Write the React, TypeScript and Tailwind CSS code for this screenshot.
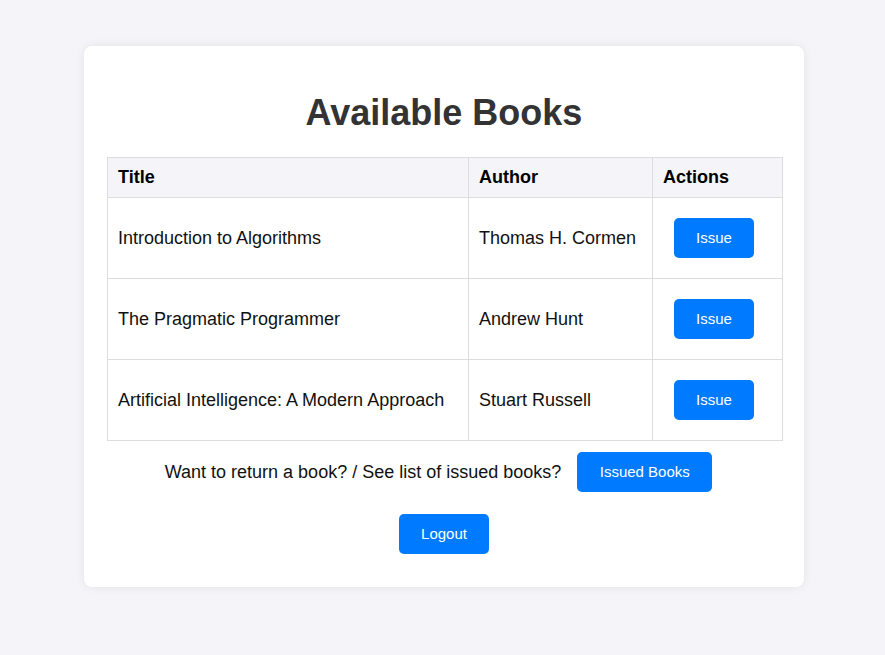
import React from "react";

const books = [
  { title: "Introduction to Algorithms", author: "Thomas H. Cormen" },
  { title: "The Pragmatic Programmer", author: "Andrew Hunt" },
  { title: "Artificial Intelligence: A Modern Approach", author: "Stuart Russell" },
];

export default function App() {
  return (
    <div className="min-h-screen bg-[#f4f4f9] pt-[46px] font-['Liberation_Sans',Arial,sans-serif]">
      <div className="ml-[84px] w-[720px] rounded-lg bg-white px-[23px] pt-[46px] pb-[33px] shadow-[0_0_10px_rgba(0,0,0,0.08)]">
        <h1 className="text-center text-[36px] leading-[41px] font-bold text-[#333]">
          Available Books
        </h1>
        <table className="mt-[24px] w-[675px] table-fixed border-collapse text-[18px] text-[#111]">
          <colgroup>
            <col className="w-[361px]" />
            <col className="w-[184px]" />
            <col className="w-[130px]" />
          </colgroup>
          <thead>
            <tr className="bg-[#f4f4f9]">
              <th className="h-[40px] border border-[#ddd] px-[10px] text-left font-bold text-black">
                Title
              </th>
              <th className="border border-[#ddd] px-[10px] text-left font-bold text-black">
                Author
              </th>
              <th className="border border-[#ddd] px-[10px] text-left font-bold text-black">
                Actions
              </th>
            </tr>
          </thead>
          <tbody>
            {books.map((b, i) => (
              <tr key={i} className="h-[81px]">
                <td className="border border-[#ddd] px-[10px] align-middle">{b.title}</td>
                <td className="border border-[#ddd] px-[10px] align-middle">{b.author}</td>
                <td className="border border-[#ddd] px-[10px] align-middle">
                  <button className="ml-[11px] h-[40px] w-[80px] rounded-[5px] bg-[#007bff] text-[15px] text-white">
                    Issue
                  </button>
                </td>
              </tr>
            ))}
          </tbody>
        </table>
        <div className="mt-[11px] flex items-center justify-center pr-[11px]">
          <span className="text-[18px] text-[#111]">
            Want to return a book? / See list of issued books?
          </span>
          <button className="ml-[16px] h-[40px] w-[135px] rounded-[5px] bg-[#007bff] text-[15px] text-white">
            Issued Books
          </button>
        </div>
        <div className="mt-[22px] flex justify-center">
          <button className="h-[40px] w-[90px] rounded-[5px] bg-[#007bff] text-[15px] text-white">
            Logout
          </button>
        </div>
      </div>
    </div>
  );
}
